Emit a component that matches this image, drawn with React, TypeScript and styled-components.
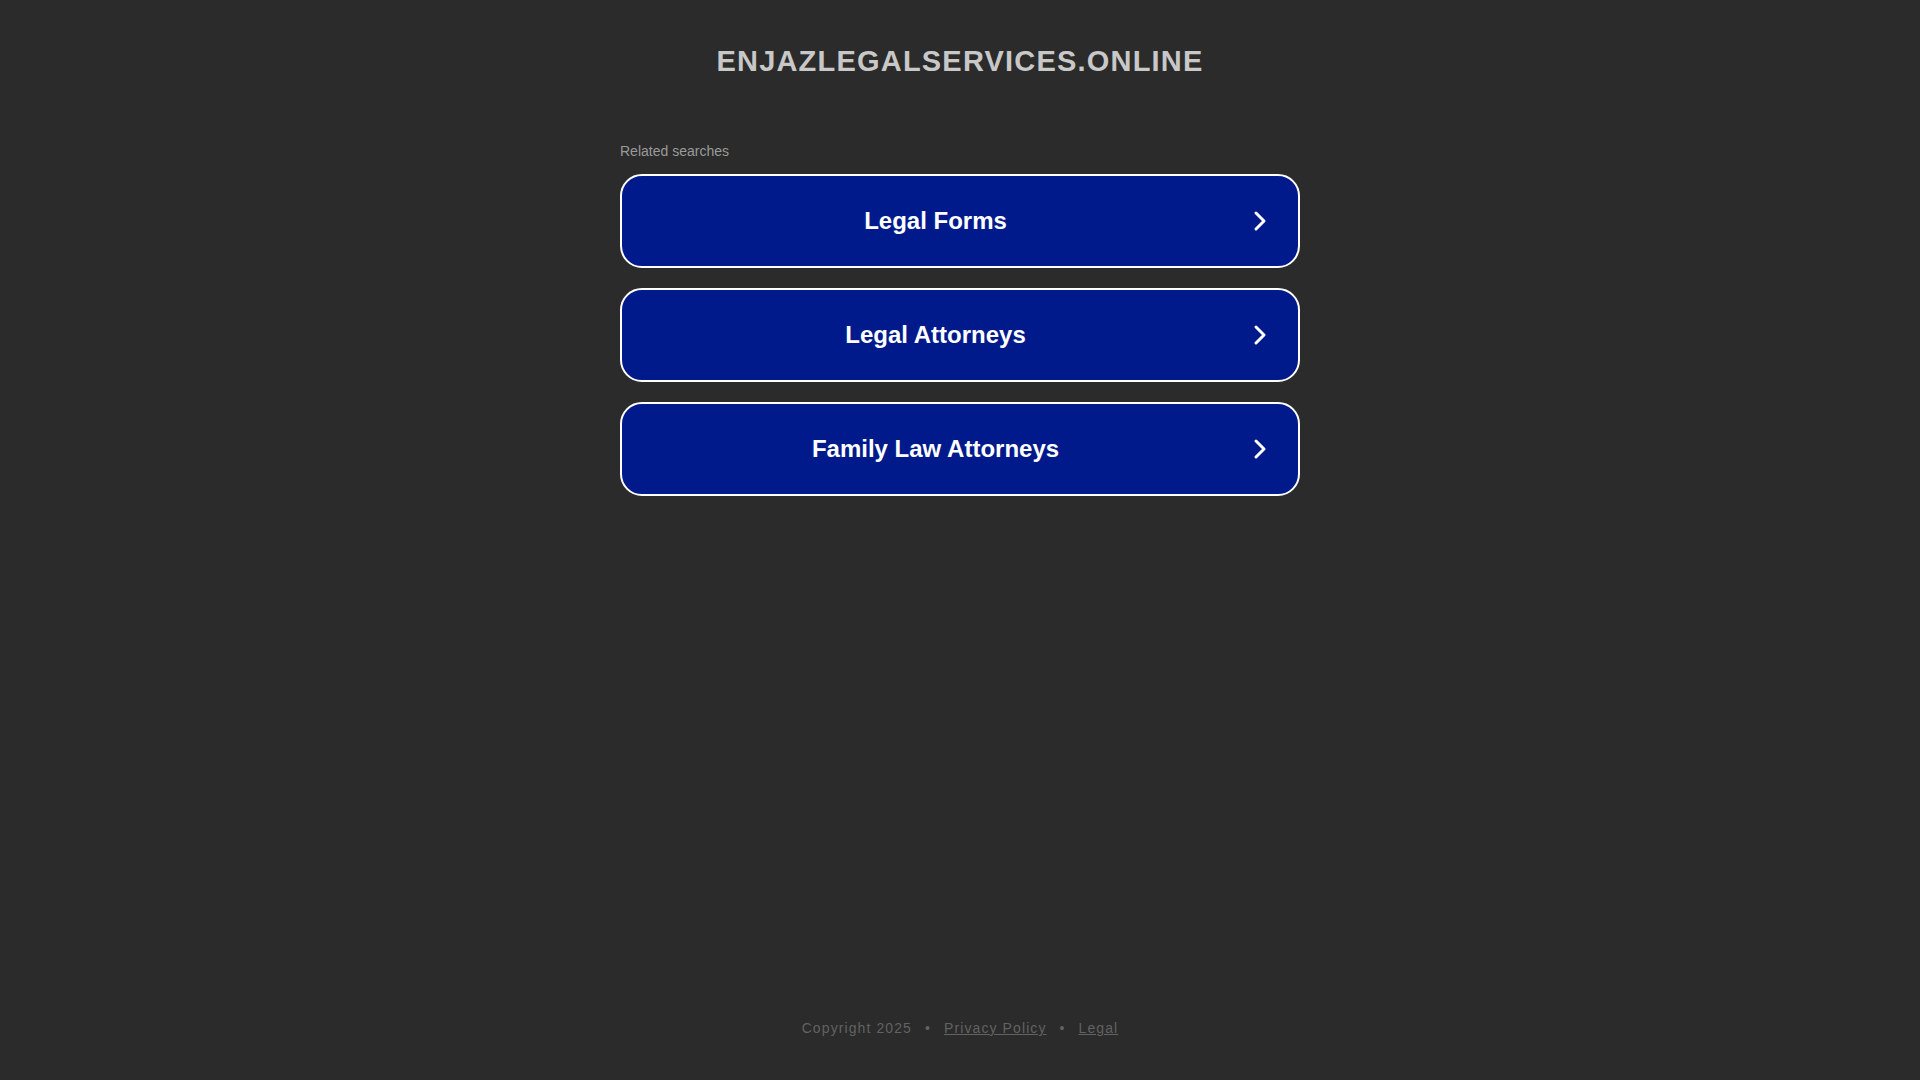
import React from 'react';
import styled, { createGlobalStyle } from 'styled-components';

const searches = ['Legal Forms', 'Legal Attorneys', 'Family Law Attorneys'];

const GlobalStyle = createGlobalStyle`
  html, body {
    margin: 0;
    padding: 0;
    background: #2b2b2b;
    font-family: Arial, "Liberation Sans", Helvetica, sans-serif;
  }
`;

const Page = styled.div`
  min-height: 100vh;
  display: flex;
  flex-direction: column;
  align-items: center;
  box-sizing: border-box;
`;

const Title = styled.h1`
  margin: 0;
  padding-top: 44px;
  font-size: 29px;
  line-height: 34px;
  font-weight: bold;
  letter-spacing: 1.2px;
  color: #c8c8c8;
  text-transform: uppercase;
`;

const Searches = styled.div`
  width: 680px;
  margin-top: 65px;
  display: flex;
  flex-direction: column;
`;

const Label = styled.div`
  font-size: 14px;
  line-height: 16px;
  color: #9a9a9a;
  margin-bottom: 15px;
`;

const List = styled.div`
  display: flex;
  flex-direction: column;
  gap: 20px;
`;

const SearchLink = styled.a`
  height: 94px;
  box-sizing: border-box;
  border: 2px solid #ffffff;
  border-radius: 22px;
  background: #011a8b;
  display: flex;
  align-items: center;
  padding: 0 31px 0 20px;
  text-decoration: none;
  cursor: pointer;
`;

const LinkText = styled.span`
  flex: 1;
  text-align: center;
  color: #ffffff;
  font-size: 24px;
  font-weight: bold;
`;

const Arrow = styled.svg`
  width: 14px;
  height: 22px;
  margin-left: 24px;
  flex-shrink: 0;
`;

const Footer = styled.footer`
  margin-top: auto;
  padding-bottom: 43px;
  font-size: 14px;
  line-height: 18px;
  letter-spacing: 1.1px;
  color: #626262;
  display: flex;
  gap: 13px;
`;

const FooterLink = styled.a`
  color: #626262;
  text-decoration: underline;
`;

export default function App() {
  return (
    <Page>
      <GlobalStyle />
      <Title>enjazlegalservices.online</Title>
      <Searches>
        <Label>Related searches</Label>
        <List>
          {searches.map((s) => (
            <SearchLink key={s} href="#">
              <LinkText>{s}</LinkText>
              <Arrow viewBox="0 0 14 22">
                <path d="M3 3 L11 11 L3 19" fill="none" stroke="#ffffff" strokeWidth="3" strokeLinecap="round" strokeLinejoin="round" />
              </Arrow>
            </SearchLink>
          ))}
        </List>
      </Searches>
      <Footer>
        <span>Copyright 2025</span>
        <span>•</span>
        <FooterLink href="#">Privacy Policy</FooterLink>
        <span>•</span>
        <FooterLink href="#">Legal</FooterLink>
      </Footer>
    </Page>
  );
}
